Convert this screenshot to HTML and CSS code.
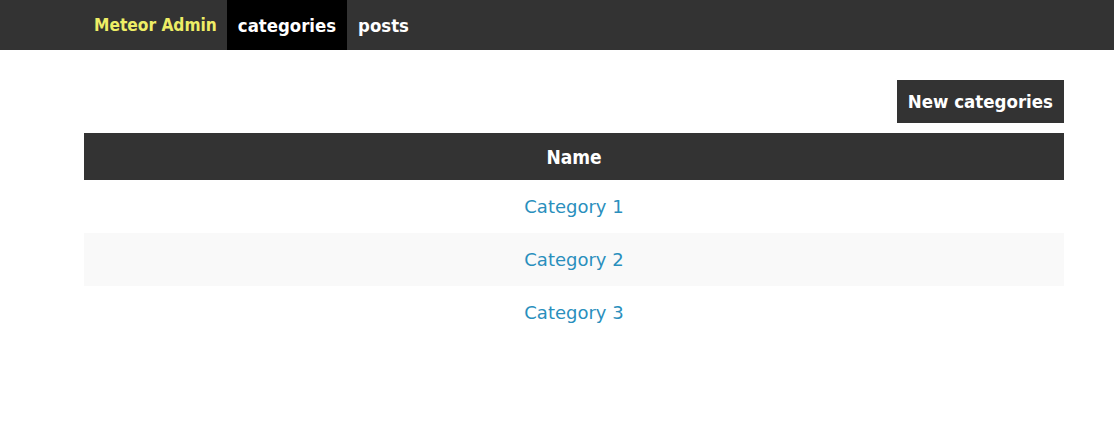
FILE: index.html
```html
<!DOCTYPE html>
<html>
<head>
<meta charset="utf-8">
<link rel="stylesheet" href="styles.css">
</head>
<body>
<nav class="topbar">
  <div class="topbar-inner">
    <a class="brand" href="#">Meteor Admin</a>
    <a class="nav-item active" href="#">categories</a>
    <a class="nav-item" href="#">posts</a>
  </div>
</nav>
<main class="container">
  <div class="actions">
    <a class="btn" href="#">New categories</a>
  </div>
  <table class="list">
    <thead>
      <tr><th>Name</th></tr>
    </thead>
    <tbody>
      <tr><td><a href="#">Category 1</a></td></tr>
      <tr class="even"><td><a href="#">Category 2</a></td></tr>
      <tr><td><a href="#">Category 3</a></td></tr>
    </tbody>
  </table>
</main>
</body>
</html>
```

FILE: styles.css
```css
html, body {
  margin: 0;
  padding: 0;
  background: #fff;
  font-family: "DejaVu Sans", "Liberation Sans", sans-serif;
}
a { text-decoration: none; }

.topbar {
  background: #333333;
  height: 50px;
}
.topbar-inner {
  display: flex;
  align-items: stretch;
  height: 50px;
  padding-left: 84px;
}
.brand {
  display: flex;
  align-items: center;
  padding: 0 10px;
  color: #eeee66;
  font-family: "DejaVu Sans Condensed", "DejaVu Sans", sans-serif;
  font-weight: bold;
  font-size: 17.2px;
}
.nav-item {
  display: flex;
  align-items: center;
  padding: 0 11px;
  color: #fff;
  font-family: "DejaVu Sans Condensed", "DejaVu Sans", sans-serif;
  font-weight: bold;
  font-size: 18.4px;
}
.nav-item.active { background: #000; }

.container {
  width: 980px;
  margin-left: 84px;
  padding-top: 30px;
}
.actions {
  display: flex;
  justify-content: flex-end;
}
.btn {
  background: #333;
  color: #fff;
  font-family: "DejaVu Sans Condensed", "DejaVu Sans", sans-serif;
  font-weight: bold;
  font-size: 18.5px;
  height: 43px;
  padding: 0 11px;
  display: flex;
  align-items: center;
}
.list {
  width: 100%;
  border-collapse: collapse;
  margin-top: 10px;
}
.list th {
  background: #333;
  color: #fff;
  font-family: "DejaVu Sans Condensed", "DejaVu Sans", sans-serif;
  font-weight: bold;
  font-size: 19px;
  height: 47px;
  padding: 0;
  text-align: center;
}
.list td {
  height: 53px;
  padding: 0;
  text-align: center;
  font-size: 18px;
}
.list tr.even td { background: #f9f9f9; }
.list td a { color: #2a8fbd; }
```
